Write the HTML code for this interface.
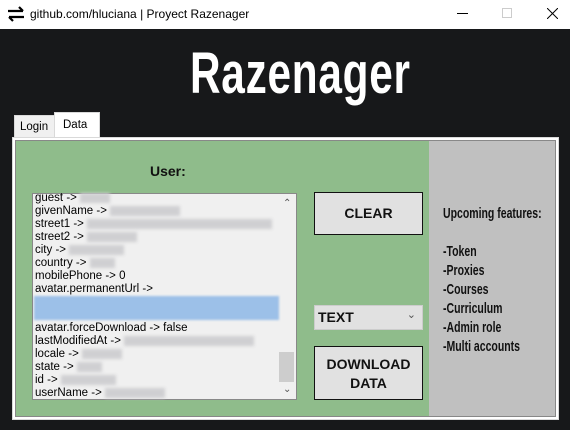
<!DOCTYPE html>
<html><head><style>
*{margin:0;padding:0;box-sizing:border-box}
body{width:570px;height:430px;background:#17181a;position:relative;overflow:hidden;font-family:"Liberation Sans",sans-serif}
.a{position:absolute}
.tb{left:0;top:0;width:570px;height:29px;background:#fff}
.li{position:absolute;left:35px;font-size:11.5px;line-height:13px;color:#000;white-space:nowrap}
.bl{display:inline-block;height:10px;background:#cfcfd2;filter:blur(1.5px);vertical-align:middle}
.btn{background:#e1e1e1;border:1px solid #111;font-weight:bold;font-size:14px;text-align:center;color:#111}
.f{font-size:15px;font-weight:bold;transform:scaleX(.7);transform-origin:0 0;white-space:nowrap;color:#111}
</style></head><body>
<div class="a tb"></div>
<svg class="a" style="left:7px;top:6px" width="18" height="16" viewBox="0 0 18 16"><path d="M1 5h15M12 1l4 4M17 11H2M6 15l-4-4" stroke="#000" stroke-width="2.2" fill="none"/></svg>
<div class="a" style="left:30px;top:7px;font-size:12px;color:#000">github.com/hluciana | Proyect Razenager</div>
<div class="a" style="left:457px;top:13px;width:11px;height:1px;background:#000"></div>
<div class="a" style="left:502px;top:8px;width:10px;height:10px;border:1px solid #ccc"></div>
<svg class="a" style="left:547px;top:8px" width="11" height="11"><path d="M0 0L11 11M11 0L0 11" stroke="#000" stroke-width="1"/></svg>
<div class="a" style="left:190px;top:40px;font-size:58px;font-weight:bold;color:#fff;transform:scaleX(.73);transform-origin:0 0;letter-spacing:1px">Razenager</div>
<div class="a" style="left:14px;top:115px;width:41px;height:23px;background:#f0f0f0;border:1px solid #d9d9d9;font-size:11.5px;padding:5px 0 0 5px">Login</div>
<div class="a" style="left:54px;top:112px;width:46px;height:27px;background:#fff;border:1px solid #d9d9d9;border-bottom:none;font-size:11.5px;padding:6px 0 0 8px">Data</div>
<div class="a" style="left:12px;top:137px;width:547px;height:283px;background:#fff;border:1px solid #d9d9d9"></div>
<div class="a" style="left:15px;top:140px;width:541px;height:277px;border:1px solid #888"></div>
<div class="a" style="left:16px;top:141px;width:413px;height:275px;background:#8fbc8b"></div>
<div class="a" style="left:429px;top:141px;width:126px;height:275px;background:#c0c0c0"></div>
<div class="a" style="left:150px;top:163px;font-size:14px;font-weight:bold;color:#111">User:</div>
<div class="a" style="left:32px;top:193px;width:265px;height:207px;background:#f0f0f0;border:1px solid #888;overflow:hidden">
<div class="a" style="left:246px;top:0;width:17px;height:205px;background:#f0f0f0"></div>
<div class="a" style="left:246px;top:158px;width:15px;height:30px;background:#cdcdcd"></div>
<div class="a" style="left:250px;top:4px;font-size:10px;color:#555">&#8963;</div>
<div class="a" style="left:250px;top:190px;font-size:10px;color:#555">&#8964;</div>
<div class="a" style="left:1px;top:102px;width:245px;height:24px;background:#9cc0e8;filter:blur(1px)"></div>
</div>
<div class="li" style="top:192px">guest -&gt; <span class="bl" style="width:30px"></span></div>
<div class="li" style="top:205px">givenName -&gt; <span class="bl" style="width:70px"></span></div>
<div class="li" style="top:218px">street1 -&gt; <span class="bl" style="width:185px"></span></div>
<div class="li" style="top:231px">street2 -&gt; <span class="bl" style="width:50px"></span></div>
<div class="li" style="top:244px">city -&gt; <span class="bl" style="width:55px"></span></div>
<div class="li" style="top:257px">country -&gt; <span class="bl" style="width:25px"></span></div>
<div class="li" style="top:270px">mobilePhone -&gt; 0</div>
<div class="li" style="top:283px">avatar.permanentUrl -&gt;</div>
<div class="li" style="top:322px">avatar.forceDownload -&gt; false</div>
<div class="li" style="top:335px">lastModifiedAt -&gt; <span class="bl" style="width:130px"></span></div>
<div class="li" style="top:348px">locale -&gt; <span class="bl" style="width:40px"></span></div>
<div class="li" style="top:361px">state -&gt; <span class="bl" style="width:25px"></span></div>
<div class="li" style="top:374px">id -&gt; <span class="bl" style="width:55px"></span></div>
<div class="li" style="top:387px">userName -&gt; <span class="bl" style="width:60px"></span></div>
<div class="a btn" style="left:314px;top:192px;width:109px;height:43px;line-height:41px">CLEAR</div>
<div class="a" style="left:314px;top:305px;width:109px;height:25px;background:#e1e1e1;border:1px solid #ccc;font-size:14px;font-weight:bold;padding:3px 0 0 3px;color:#111">TEXT<span style="position:absolute;right:6px;top:2px;font-size:11px;color:#555;font-weight:normal">&#8964;</span></div>
<div class="a btn" style="left:314px;top:346px;width:109px;height:54px;line-height:19px;padding-top:8px">DOWNLOAD<br>DATA</div>
<div class="a f" style="left:443px;top:205px">Upcoming features:</div>
<div class="a f" style="left:443px;top:242px;line-height:19px">-Token<br>-Proxies<br>-Courses<br>-Curriculum<br>-Admin role<br>-Multi accounts</div>
</body></html>
